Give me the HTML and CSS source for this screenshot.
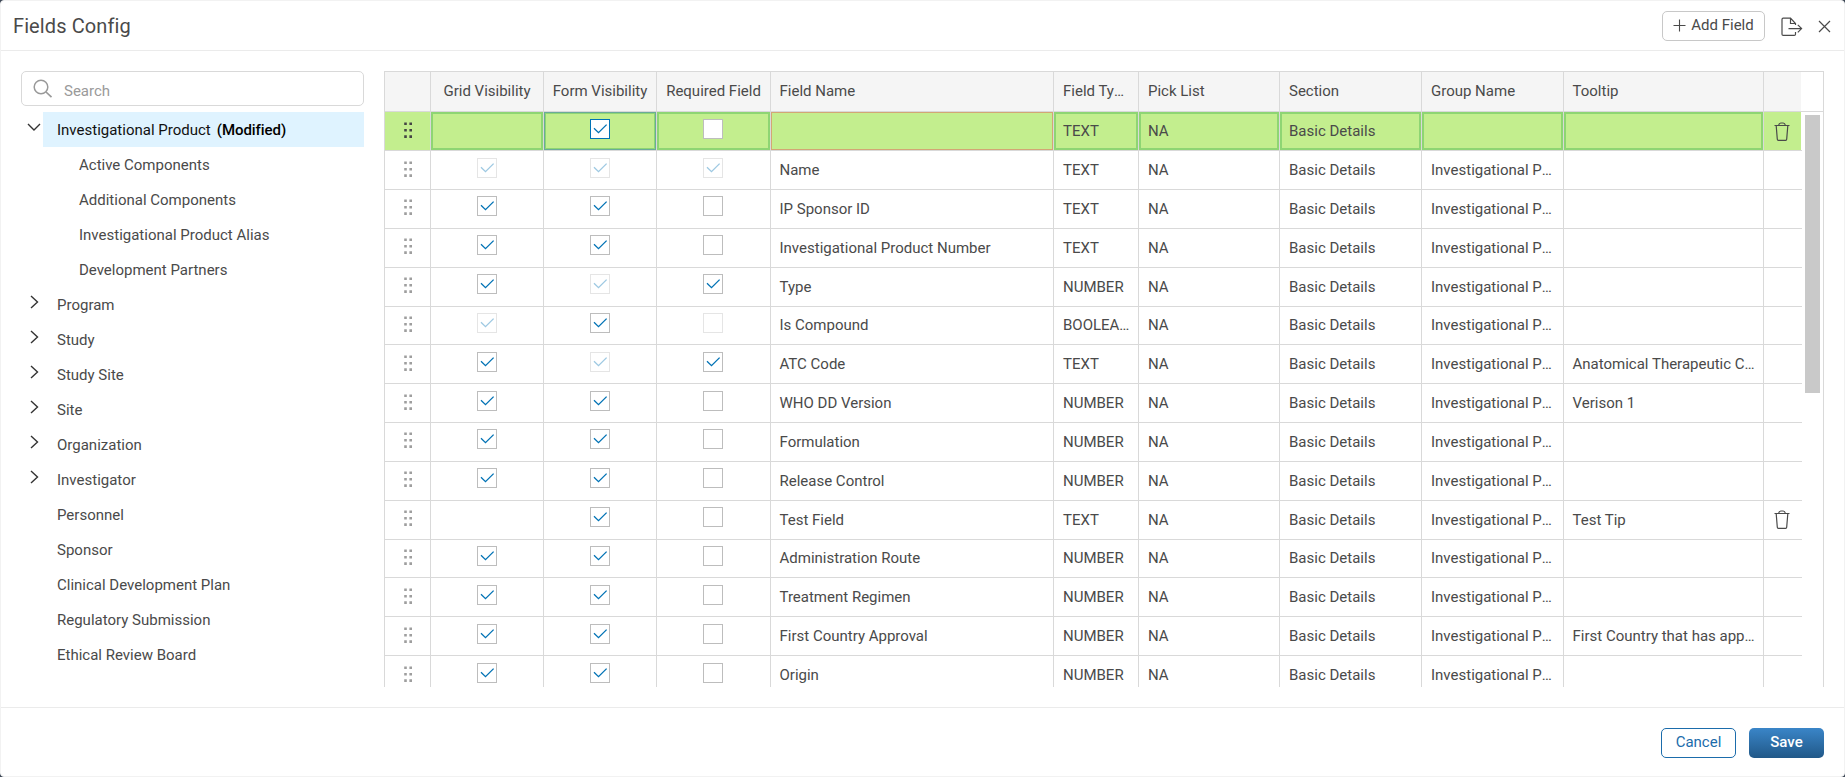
FILE: index.html
```html
<!DOCTYPE html>
<html lang="en">
<head>
<meta charset="utf-8">
<title>Fields Config</title>
<link rel="stylesheet" href="styles.css">
</head>
<body>
<svg class="sprite" aria-hidden="true">
  <symbol id="check" viewBox="0 0 18 18"><path d="M3 8.3 7.5 12.7 15.6 4.6" fill="none" stroke="currentColor" stroke-width="1.3"/></symbol>
  <symbol id="grip" viewBox="0 0 9 17"><path d="M.2.5h2.6v2.6H.2zM5.4.5h2.6v2.6H5.4zM.2 6.9h2.6v2.6H.2zM5.4 6.9h2.6v2.6H5.4zM.2 13.3h2.6v2.6H.2zM5.4 13.3h2.6v2.6H5.4z" fill="currentColor"/></symbol>
  <symbol id="trash" viewBox="0 0 16 19"><path d="M.5 3.5h15M2.2 3.7 3.3 17.3q.1 1 1 1h7.4q.9 0 1-1l1.1-13.6M4.6 3.3Q5.2 1 6.8 1h2.4q1.6 0 2.2 2.3" fill="none" stroke="currentColor" stroke-width="1.2"/></symbol>
  <symbol id="right" viewBox="0 0 9 14"><path d="M1 1 7.5 7 1 13" fill="none" stroke="currentColor" stroke-width="1.4"/></symbol>
  <symbol id="down" viewBox="0 0 14 9"><path d="M1 1 7 7 13 1" fill="none" stroke="currentColor" stroke-width="1.4"/></symbol>
</svg>
<div class="modal">
  <header class="modal-head">
    <h1>Fields Config</h1>
    <button class="add"><svg width="13" height="13" viewBox="0 0 13 13"><path d="M6.5.5v12M.5 6.5h12" stroke="currentColor" stroke-width="1.1"/></svg>Add Field</button>
    <svg class="export" width="22" height="20" viewBox="0 0 22 20"><path d="M14.5 8V6.5L9.5 1.2H2.2Q1 1.2 1 2.4v14.8q0 1.2 1.2 1.2h11q1.3 0 1.3-1.2V15M9.5 1.2v5.3h5M7.5 11.6h13M16.8 7.8l3.8 3.8-3.8 3.8" fill="none" stroke="currentColor" stroke-width="1.2"/></svg>
    <svg class="close" width="13" height="13" viewBox="0 0 13 13"><path d="M1 1l11 11M12 1 1 12" stroke="currentColor" stroke-width="1.2"/></svg>
  </header>
  <main class="content">
    <aside class="side">
      <div class="search"><svg width="20" height="20" viewBox="0 0 20 20"><circle cx="8" cy="8" r="6.8" fill="none" stroke="currentColor" stroke-width="1.5"/><path d="M13 13l5.5 5.2" stroke="currentColor" stroke-width="1.7"/></svg><span>Search</span></div>
      <ul class="tree" id="tree"></ul>
    </aside>
    <section class="grid">
      <div class="row head" id="head"></div>
      <div class="rows"><div class="list" id="rows"></div><div class="track"><div class="thumb"></div></div></div>
    </section>
  </main>
  <footer class="foot"><button class="cancel">Cancel</button><button class="save">Save</button></footer>
</div>
<script src="app.js"></script>
</body>
</html>
```
FILE: styles.css
```css
* { box-sizing: border-box; }
body { margin: 0; background: #3c4654; font-family: Roboto, sans-serif; font-size: 15px; color: #4a4a4a; overflow: hidden; }
button { font: inherit; padding: 0; background: #fff; }
svg { display: block; flex: none; }
.sprite { position: absolute; width: 0; height: 0; }
.modal { height: 777px; background: #fff; border: 1px solid #f2f2f2; border-radius: 4px; display: flex; flex-direction: column; }
.modal-head { height: 50px; flex: none; border-bottom: 1px solid #ebebeb; display: flex; align-items: center; padding: 0 13px 0 12px; }
h1 { margin: 0 auto 0 0; font-size: 20px; font-weight: 400; letter-spacing: .1px; line-height: 24px; }
.add { width: 103px; height: 30px; border: 1px solid #c8c8c8; border-radius: 5px; color: #4a4a4a; display: flex; align-items: center; justify-content: center; gap: 5px; padding-bottom: 2px; }
.add svg { margin-top: 1px; }
.export { margin: 2px 0 0 16px; }
.close { margin: 2px 0 0 15px; }
.content { height: 656px; flex: none; display: flex; padding: 20px 20px 0; }
.side { width: 343px; flex: none; }
.search { height: 35px; border: 1px solid #d9d9d9; border-radius: 5px; display: flex; padding: 7px 0 0 11px; color: #999; }
.search span { margin: 3px 0 0 11px; line-height: 18px; color: #9a9a9a; }
.tree { list-style: none; margin: 6px 0 0; padding: 0; }
.tree li { display: flex; height: 35px; }
.arrow { width: 22px; flex: none; padding: 8px 0 0 9px; color: #333; }
.arrow.open { padding: 11px 0 0 6px; }
.label { flex: 1; padding: 0 0 0 14px; line-height: 36px; white-space: pre; }
.label.child { padding-left: 36px; }
.label.selected { background: #dff3ff; color: #111; }
.label b { font-weight: 500; color: #000; margin-left: 6px; letter-spacing: -.05px; }
.grid { flex: 1; margin-left: 20px; height: 616px; border: solid #d9d9d9; border-width: 1px 1px 0; }
.row { display: grid; grid-template-columns: 46px 113px 113px 114px 283px 85px 141px 142px 142px 200px 38px; width: 1417px; border-bottom: 1px solid #d9d9d9; height: 38.859px; }
.head { height: 40px; width: auto; }
.cell { border-right: 1px solid #d9d9d9; padding: .85px 7px 0 9px; line-height: 37.8px; white-space: nowrap; overflow: hidden; text-overflow: ellipsis; min-width: 0; }
.cell:nth-child(5), .cell:nth-child(10) { padding-left: 8.5px; }
.cell:last-child { border-right: 0; padding: 9.6px 0 0 10px; }
.head .cell { background: #f5f5f5; line-height: 39px; padding-top: 0; padding-right: 9px; }
.head .cell:last-child { width: 37px; }
.rows { display: flex; height: 575px; overflow: hidden; }
.list { width: 1417px; flex: none; padding-top: .34px; }
.cell.grip { padding: 9.4px 0 0 18.6px; color: #9e9e9e; }
.cell.mid { padding: 6.4px 0 0; display: flex; justify-content: center; }
.cell.mid:nth-child(4) { padding-right: 1px; }
.head .cell.mid { display: block; padding: 0; text-align: center; }
.box { width: 20px; height: 20px; border: 1px solid #bdbdbd; background: #fff; color: #0072b5; }
.box.off { opacity: .38; }
.box.focus { border-color: #0072b5; }
.row.new .cell { background: #c3ee8e; box-shadow: inset 0 0 0 2px #8ed573; }
.row.new .grip, .row.new .cell:last-child { box-shadow: none; }
.row.new .cell:last-child { width: 37px; }
.row.new .grip { color: #444; }
.row.new .cell.active { box-shadow: inset 0 0 0 1px #6aab98, inset 0 0 0 2px #8ed573; }
.row.new .cell.invalid { box-shadow: inset 0 0 0 1px #d3a674; }
.track { width: 21px; padding: 3px 0 0 3px; }
.thumb { width: 15px; height: 278px; background: #c9c9c9; }
.foot { flex: 1; border-top: 1px solid #ebebeb; display: flex; justify-content: flex-end; gap: 13px; padding: 20px 20px 0; }
.foot button { width: 75px; height: 30px; border-radius: 5px; line-height: 26px; padding-bottom: 2px; }
.cancel { border: 1px solid #1b6cab; color: #1b6cab; }
.foot .save { border: 0; color: #fff; font-weight: 500; background: linear-gradient(#3a85c8, #215888); }
```
FILE: app.js
```js
const icon = (id, w, h) => `<svg width="${w}" height="${h}"><use href="#${id}"/></svg>`;

const tree = [
  ['Investigational Product', 'open'], ['Active Components', 'child'], ['Additional Components', 'child'],
  ['Investigational Product Alias', 'child'], ['Development Partners', 'child'],
  ['Program', 'closed'], ['Study', 'closed'], ['Study Site', 'closed'], ['Site', 'closed'],
  ['Organization', 'closed'], ['Investigator', 'closed'], ['Personnel', ''], ['Sponsor', ''],
  ['Clinical Development Plan', ''], ['Regulatory Submission', ''], ['Ethical Review Board', '']
];
document.getElementById('tree').innerHTML = tree.map(([name, kind]) => {
  const arrow = kind === 'open' ? icon('down', 14, 9) : kind === 'closed' ? icon('right', 9, 14) : '';
  const cls = kind === 'open' ? 'selected' : kind;
  return `<li><span class="arrow ${kind}">${arrow}</span><span class="label ${cls}">${name}${kind === 'open' ? '<b>(Modified)</b>' : ''}</span></li>`;
}).join('');

const heads = ['', 'Grid Visibility', 'Form Visibility', 'Required Field', 'Field Name', 'Field Type', 'Pick List', 'Section', 'Group Name', 'Tooltip', ''];
document.getElementById('head').innerHTML = heads.map((h, i) => `<div class="cell${i > 0 && i < 4 ? ' mid' : ''}">${h}</div>`).join('');

// Checkbox codes: c checked, u unchecked, C/U the disabled forms, f focused, - none
const rows = [
  ['-fu', '', 'TEXT', '', true], ['CCC', 'Name', 'TEXT'], ['ccu', 'IP Sponsor ID', 'TEXT'],
  ['ccu', 'Investigational Product Number', 'TEXT'], ['cCc', 'Type', 'NUMBER'], ['CcU', 'Is Compound', 'BOOLEA…'],
  ['cCc', 'ATC Code', 'TEXT', 'Anatomical Therapeutic Chemical'], ['ccu', 'WHO DD Version', 'NUMBER', 'Verison 1'],
  ['ccu', 'Formulation', 'NUMBER'], ['ccu', 'Release Control', 'NUMBER'], ['-cu', 'Test Field', 'TEXT', 'Test Tip', true],
  ['ccu', 'Administration Route', 'NUMBER'], ['ccu', 'Treatment Regimen', 'NUMBER'],
  ['ccu', 'First Country Approval', 'NUMBER', 'First Country that has approved'], ['ccu', 'Origin', 'NUMBER']
];
const box = c => {
  if (c === '-') return '';
  const state = c === 'f' ? ' focus' : 'CU'.includes(c) ? ' off' : '';
  return `<span class="box${state}">${'cCf'.includes(c) ? icon('check', 18, 18) : ''}</span>`;
};
document.getElementById('rows').innerHTML = rows.map(([boxes, name, type, tip = '', removable], i) =>
  `<div class="row${i ? '' : ' new'}"><div class="cell grip">${icon('grip', 9, 17)}</div>` +
  [...boxes].map(c => `<div class="cell mid${c === 'f' ? ' active' : ''}">${box(c)}</div>`).join('') +
  `<div class="cell${i ? '' : ' invalid'}">${name}</div>` +
  [type, 'NA', 'Basic Details', i ? 'Investigational Product' : '', tip].map(t => `<div class="cell">${t}</div>`).join('') +
  `<div class="cell">${removable ? icon('trash', 16, 19) : ''}</div></div>`).join('');
```
